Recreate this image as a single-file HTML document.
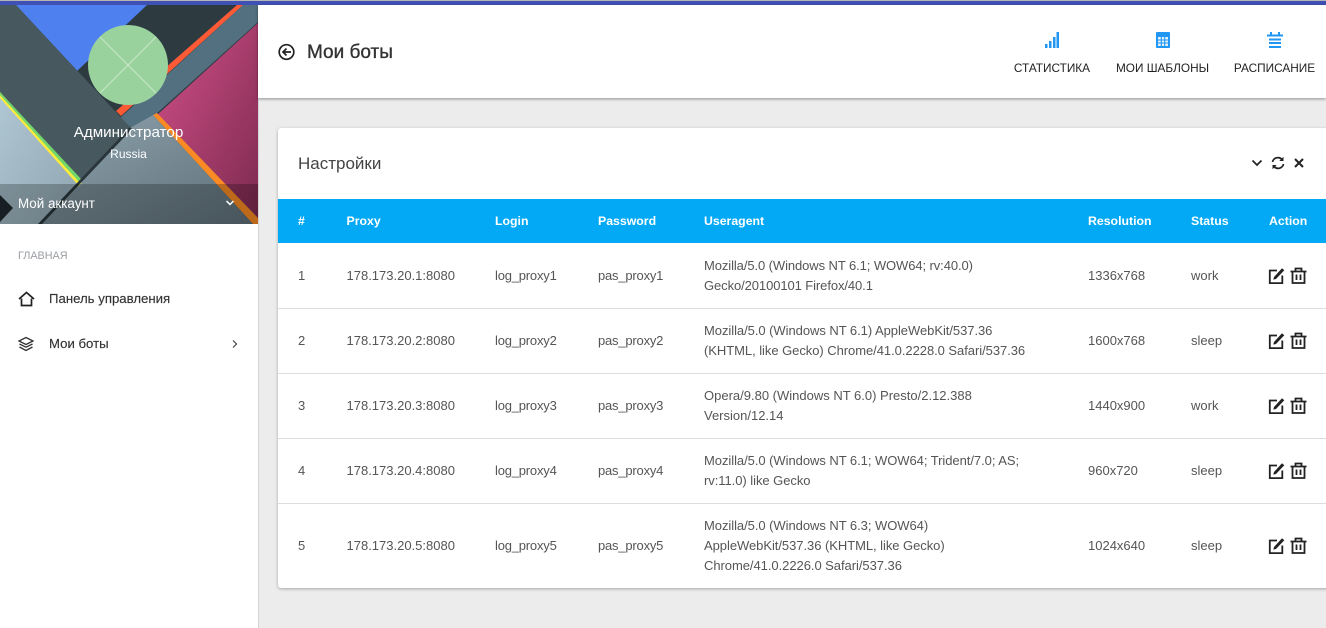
<!DOCTYPE html>
<html lang="ru"><head><meta charset="utf-8"><title>Мои боты</title>
<style>
html,body{margin:0;padding:0}
body{width:1326px;height:628px;overflow:hidden;position:relative;background:#ececec;font-family:"Liberation Sans",Arial,sans-serif;color:#555}
.a{position:absolute}
.t{position:absolute;white-space:nowrap;line-height:20px;font-size:13px;margin-top:1px}
.u{letter-spacing:-.05px}
.lp{letter-spacing:-.2px}
.h{font-weight:bold;color:#fff;font-size:12.3px;margin-top:0}
.n{font-size:11.8px;color:#222;text-align:center;line-height:14px;margin-top:0}
.s{color:#333;font-size:13.2px;-webkit-text-stroke:.15px #333}
.line{position:absolute;left:278px;width:1048px;height:1px;background:#ddd}
svg{position:absolute;display:block}
</style></head><body>
<div class="a" style="left:0;top:0;width:1326px;height:1px;background:#b5b5b5"></div>
<div class="a" style="left:0;top:1px;width:1326px;height:4px;background:#3f51b5"></div>

<!-- sidebar -->
<div class="a" style="left:0;top:5px;width:258px;height:623px;background:#fff;border-right:1px solid #d4d4d4"></div>
<svg style="left:0;top:5px" width="258" height="219" viewBox="0 5 258 219">
<defs>
<linearGradient id="p" x1="0" y1="0" x2="1" y2="1"><stop offset="0" stop-color="#d25088"/><stop offset="1" stop-color="#7c2a50"/></linearGradient>
<linearGradient id="g" x1="0" y1="0" x2="1" y2="1"><stop offset="0" stop-color="#8ea3ae"/><stop offset="1" stop-color="#5f7079"/></linearGradient>
<linearGradient id="l" x1="0" y1="0" x2="1" y2="1"><stop offset="0" stop-color="#b0c8d4"/><stop offset="1" stop-color="#8ea4af"/></linearGradient>
</defs>
<rect x="0" y="5" width="258" height="219" fill="#2d3b41"/>
<polygon points="16,5 147,5 77,71" fill="#4f80f0"/>
<polygon points="237,5 243,5 121,116 116,111" fill="#ff5a36"/>
<polygon points="243,5 258,5 258,22 155,115 130,128 120,118" fill="#537080"/>
<polygon points="258,23 157,115 258,222" fill="url(#p)"/>
<polygon points="153,115 157,113 258,218 258,224 253,224" fill="#f98a24"/>
<polygon points="153,115 253,224 40,224 130,128" fill="url(#g)"/>
<polygon points="0,92 82,183 40,224 0,224" fill="url(#l)"/>
<polygon points="0,5 16,5 130,127 82,181 0,92" fill="#47585f"/>
<polygon points="0,92 0,98 79,186 82,182" fill="#ffeb3b"/>
<polygon points="0,92 0,95 80,183 82,180" fill="#72d66a"/>
<polygon points="130,127 132,129 42,224 38,224" fill="#2a363b"/>
<polygon points="0,195 13,208 0,222" fill="#1f2a2f"/>
<rect x="0" y="184" width="258" height="40" fill="#000" fill-opacity=".24"/>
<circle cx="128" cy="65" r="40" fill="#9ad29e"/>
<path d="M100 37L156 93M156 37L100 93" stroke="#c9e6cb" stroke-width="1"/>
</svg>
<div class="t" style="left:0;width:257px;text-align:center;top:122px;font-size:15.2px;color:#fff">Администратор</div>
<div class="t" style="left:0;width:257px;text-align:center;top:143px;font-size:12px;color:#fff">Russia</div>
<div class="t" style="left:18px;top:193px;font-size:13.4px;color:#fff">Мой аккаунт</div>
<svg style="left:225px;top:199px" width="10" height="8" viewBox="0 0 10 8"><path d="M1.500 2L5 5.500 8.500 2" fill="none" stroke="#fff" stroke-width="1.500"/></svg>
<div class="t" style="left:18px;top:245px;font-size:10.8px;color:#9a9fa3">ГЛАВНАЯ</div>
<svg style="left:18px;top:291px" width="17" height="16" viewBox="0 0 17 16"><path d="M1 8L8.500 1.500 16 8M3.500 7.500V14.500H13.500V7.500" fill="none" stroke="#222" stroke-width="1.700"/></svg>
<div class="t s" style="left:49px;top:288px">Панель управления</div>
<svg style="left:18px;top:336px" width="16" height="16" viewBox="0 0 16 16"><path d="M8 1.500L15 5 8 8.500 1 5ZM1.500 8L8 11.200 14.500 8M1.500 11L8 14.500 14.500 11" fill="none" stroke="#333" stroke-width="1.300"/></svg>
<div class="t s" style="left:49px;top:333px">Мои боты</div>
<svg style="left:231px;top:339px" width="8" height="10" viewBox="0 0 8 10"><path d="M2 1.500L5.500 5 2 8.500" fill="none" stroke="#444" stroke-width="1.200"/></svg>

<!-- header -->
<div class="a" style="left:258px;top:5px;width:1068px;height:93px;background:#fff;box-shadow:0 1px 3px rgba(0,0,0,.4)"></div>
<svg style="left:278px;top:43px" width="18" height="18" viewBox="0 0 18 18"><circle cx="8.500" cy="9" r="7.300" fill="none" stroke="#222" stroke-width="1.700"/><path d="M13 9H5M8.500 5.500L5 9 8.500 12.500" fill="none" stroke="#222" stroke-width="1.700"/></svg>
<div class="t" style="left:307px;top:42px;font-size:19px;color:#333;-webkit-text-stroke:.35px #333">Мои боты</div>
<svg style="left:1044px;top:32px" width="16" height="16" viewBox="0 0 16 16" fill="#2196f3"><rect x="1" y="12" width="2.500" height="4"/><rect x="5" y="9" width="2.500" height="7"/><rect x="9" y="5" width="2.500" height="11"/><rect x="12.500" y="0" width="2.500" height="16"/></svg>
<svg style="left:1155px;top:32px" width="16" height="16" viewBox="0 0 16 16"><rect x="1" y="0" width="14" height="16" rx="1" fill="#2196f3"/><path d="M3 5H13V14H3Z" fill="#e3f2fd"/><path d="M3 8H13M3 11H13M6.300 5V14M9.700 5V14" stroke="#2196f3" stroke-width="1.100"/></svg>
<svg style="left:1267px;top:32px" width="16" height="16" viewBox="0 0 16 16"><path d="M4 0V3M12 0V3" stroke="#2196f3" stroke-width="2"/><path d="M0 3.500H16M2 7.500H14M2 11H14M2 15H14" stroke="#2196f3" stroke-width="2"/></svg>
<div class="t n" style="left:1002px;width:100px;top:61px">СТАТИСТИКА</div>
<div class="t n" style="left:1103px;width:119px;top:61px">МОИ ШАБЛОНЫ</div>
<div class="t n" style="left:1225px;width:99px;top:61px">РАСПИСАНИЕ</div>

<!-- card -->
<div class="a" style="left:278px;top:128px;width:1060px;height:460px;background:#fff;border-radius:3px;box-shadow:0 1px 3px rgba(0,0,0,.3)"></div>
<div class="t" style="left:298px;top:153px;font-size:17px;color:#444">Настройки</div>
<svg style="left:1251px;top:158px" width="12" height="10" viewBox="0 0 12 10"><path d="M1.500 2.500L6 7 10.500 2.500" fill="none" stroke="#222" stroke-width="1.700"/></svg>
<svg style="left:1271px;top:156px" width="14" height="14" viewBox="0 0 14 14"><path d="M1.500 6A5.500 5.500 0 0 1 11 3.500M12.500 8A5.500 5.500 0 0 1 3 10.500" fill="none" stroke="#222" stroke-width="1.700"/><path d="M12.500 .8V5H8.300ZM1.500 13.200V9H5.700Z" fill="#222"/></svg>
<svg style="left:1294px;top:158px" width="10" height="10" viewBox="0 0 10 10"><path d="M1 1L9 9M9 1L1 9" stroke="#222" stroke-width="2"/></svg>
<div class="a" style="left:278px;top:199px;width:1048px;height:44px;background:#03a9f4"></div>
<div class="t h" style="left:298px;top:211px">#</div>
<div class="t h" style="left:346.500px;top:211px">Proxy</div>
<div class="t h" style="left:495px;top:211px">Login</div>
<div class="t h" style="left:598px;top:211px">Password</div>
<div class="t h" style="left:704px;top:211px">Useragent</div>
<div class="t h" style="left:1088px;top:211px">Resolution</div>
<div class="t h" style="left:1191px;top:211px">Status</div>
<div class="t h" style="left:1269px;top:211px">Action</div>

<div class="line" style="top:308px"></div><div class="line" style="top:373px"></div><div class="line" style="top:438px"></div><div class="line" style="top:503px"></div>

<svg width="0" height="0" style="left:0;top:0"><defs>
<symbol id="e" viewBox="0 0 17 17"><path d="M9 3.500H1.800V16.100H14.300V8.500" fill="none" stroke="#222" stroke-width="1.800"/><path d="M6 10L14 1.200 16.300 3.300 8 12 5.300 12.600Z" fill="#222"/></symbol>
<symbol id="d" viewBox="0 0 17 17"><path d="M0.500 4.500H16.500M5.500 4.500V1.500H11.500V4.500M2.500 4.500V16H14.500V4.500M6.500 7.500V13M10.500 7.500V13" fill="none" stroke="#222" stroke-width="1.800"/></symbol>
</defs></svg>

<!-- row 1 -->
<div class="t" style="left:298px;top:265px">1</div><div class="t" style="left:346.500px;top:265px">178.173.20.1:8080</div><div class="t lp" style="left:495px;top:265px">log_proxy1</div><div class="t lp" style="left:598px;top:265px">pas_proxy1</div>
<div class="t" style="left:704px;top:255px;letter-spacing:-.09px">Mozilla/5.0 (Windows NT 6.1; WOW64; rv:40.0)<br>Gecko/20100101 Firefox/40.1</div>
<div class="t" style="left:1088px;top:265px">1336x768</div><div class="t" style="left:1191px;top:265px">work</div>
<svg style="left:1268px;top:267px" width="17" height="17"><use href="#e"/></svg><svg style="left:1290px;top:267px" width="17" height="17"><use href="#d"/></svg>
<!-- row 2 -->
<div class="t" style="left:298px;top:330px">2</div><div class="t" style="left:346.500px;top:330px">178.173.20.2:8080</div><div class="t lp" style="left:495px;top:330px">log_proxy2</div><div class="t lp" style="left:598px;top:330px">pas_proxy2</div>
<div class="t u" style="left:704px;top:320px">Mozilla/5.0 (Windows NT 6.1) AppleWebKit/537.36<br>(KHTML, like Gecko) Chrome/41.0.2228.0 Safari/537.36</div>
<div class="t" style="left:1088px;top:330px">1600x768</div><div class="t" style="left:1191px;top:330px">sleep</div>
<svg style="left:1268px;top:332px" width="17" height="17"><use href="#e"/></svg><svg style="left:1290px;top:332px" width="17" height="17"><use href="#d"/></svg>
<!-- row 3 -->
<div class="t" style="left:298px;top:395px">3</div><div class="t" style="left:346.500px;top:395px">178.173.20.3:8080</div><div class="t lp" style="left:495px;top:395px">log_proxy3</div><div class="t lp" style="left:598px;top:395px">pas_proxy3</div>
<div class="t" style="left:704px;top:385px">Opera/9.80 (Windows NT 6.0) Presto/2.12.388<br>Version/12.14</div>
<div class="t" style="left:1088px;top:395px">1440x900</div><div class="t" style="left:1191px;top:395px">work</div>
<svg style="left:1268px;top:397px" width="17" height="17"><use href="#e"/></svg><svg style="left:1290px;top:397px" width="17" height="17"><use href="#d"/></svg>
<!-- row 4 -->
<div class="t" style="left:298px;top:460px">4</div><div class="t" style="left:346.500px;top:460px">178.173.20.4:8080</div><div class="t lp" style="left:495px;top:460px">log_proxy4</div><div class="t lp" style="left:598px;top:460px">pas_proxy4</div>
<div class="t u" style="left:704px;top:450px">Mozilla/5.0 (Windows NT 6.1; WOW64; Trident/7.0; AS;<br>rv:11.0) like Gecko</div>
<div class="t" style="left:1088px;top:460px">960x720</div><div class="t" style="left:1191px;top:460px">sleep</div>
<svg style="left:1268px;top:462px" width="17" height="17"><use href="#e"/></svg><svg style="left:1290px;top:462px" width="17" height="17"><use href="#d"/></svg>
<!-- row 5 -->
<div class="t" style="left:298px;top:535px">5</div><div class="t" style="left:346.500px;top:535px">178.173.20.5:8080</div><div class="t lp" style="left:495px;top:535px">log_proxy5</div><div class="t lp" style="left:598px;top:535px">pas_proxy5</div>
<div class="t u" style="left:704px;top:515px">Mozilla/5.0 (Windows NT 6.3; WOW64)<br>AppleWebKit/537.36 (KHTML, like Gecko)<br>Chrome/41.0.2226.0 Safari/537.36</div>
<div class="t" style="left:1088px;top:535px">1024x640</div><div class="t" style="left:1191px;top:535px">sleep</div>
<svg style="left:1268px;top:537px" width="17" height="17"><use href="#e"/></svg><svg style="left:1290px;top:537px" width="17" height="17"><use href="#d"/></svg>
</body></html>
